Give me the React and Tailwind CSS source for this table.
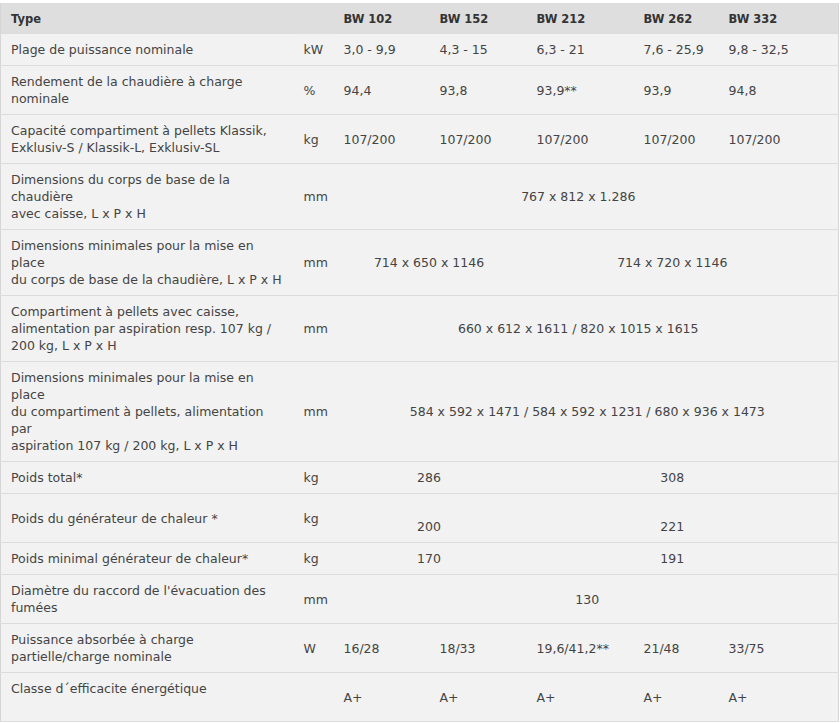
const models = ["BW 102", "BW 152", "BW 212", "BW 262", "BW 332"];

// each row: label lines, unit, cells. a cell is either a string or {span, text, pad}
const rows = [
  { label: ["Plage de puissance nominale"], unit: "kW", cells: ["3,0 - 9,9", "4,3 - 15", "6,3 - 21", "7,6 - 25,9", "9,8 - 32,5"] },
  { label: ["Rendement de la chaudière à charge", "nominale"], unit: "%", cells: ["94,4", "93,8", "93,9**", "93,9", "94,8"] },
  { label: ["Capacité compartiment à pellets Klassik,", "Exklusiv-S / Klassik-L, Exklusiv-SL"], unit: "kg", cells: ["107/200", "107/200", "107/200", "107/200", "107/200"] },
  { label: ["Dimensions du corps de base de la", "chaudière", "avec caisse, L x P x H"], unit: "mm", cells: [{ span: 5, text: "767 x 812 x 1.286", pad: "pl-0 pr-[15px]" }] },
  {
    label: ["Dimensions minimales pour la mise en", "place", "du corps de base de la chaudière, L x P x H"],
    unit: "mm",
    cells: [
      { span: 2, text: "714 x 650 x 1146", pad: "pl-0 pr-[2px]" },
      { span: 3, text: "714 x 720 x 1146", pad: "pl-0 pr-[20px]" },
    ],
  },
  { label: ["Compartiment à pellets avec caisse,", "alimentation par aspiration resp. 107 kg /", "200 kg, L x P x H"], unit: "mm", cells: [{ span: 5, text: "660 x 612 x 1611 / 820 x 1015 x 1615", pad: "pl-0 pr-[15px]" }] },
  {
    label: ["Dimensions minimales pour la mise en", "place", "du compartiment à pellets, alimentation", "par", "aspiration 107 kg / 200 kg, L x P x H"],
    unit: "mm",
    cells: [{ span: 5, text: "584 x 592 x 1471 / 584 x 592 x 1231 / 680 x 936 x 1473", pad: "pl-[3px] pr-0" }],
  },
  {
    label: ["Poids total*"],
    unit: "kg",
    cells: [
      { span: 2, text: "286", pad: "pl-0 pr-[2px]" },
      { span: 3, text: "308", pad: "pl-0 pr-[20px]" },
    ],
  },
  {
    label: ["Poids du générateur de chaleur *"],
    unit: "kg",
    cells: [
      { span: 2, text: "200", pad: "pl-0 pr-[2px]", lower: true },
      { span: 3, text: "221", pad: "pl-0 pr-[20px]", lower: true },
    ],
  },
  {
    label: ["Poids minimal générateur de chaleur*"],
    unit: "kg",
    cells: [
      { span: 2, text: "170", pad: "pl-0 pr-[2px]" },
      { span: 3, text: "191", pad: "pl-0 pr-[20px]" },
    ],
  },
  { label: ["Diamètre du raccord de l'évacuation des", "fumées"], unit: "mm", cells: [{ span: 5, text: "130", pad: "pl-[3px] pr-0" }] },
  { label: ["Puissance absorbée à charge", "partielle/charge nominale"], unit: "W", cells: ["16/28", "18/33", "19,6/41,2**", "21/48", "33/75"] },
  { label: ["Classe d´efficacite énergétique", "\u00a0"], unit: "", cells: ["A+", "A+", "A+", "A+", "A+"] },
];

const td = "align-middle pt-[7px] pb-[7px] border-b border-[#dcdcdc] whitespace-nowrap";

function Lines({ lines }) {
  return lines.map((l, i) => (
    <span key={i}>
      {i > 0 && <br />}
      {l}
    </span>
  ));
}

export default function App() {
  return (
    <div className="bg-white pt-[3px] w-[840px]" style={{ fontFamily: '"DejaVu Sans", Verdana, sans-serif' }}>
      <table className="table-fixed border-collapse w-[838px] text-[12.5px] leading-[17px] text-[#444] bg-[#f2f2f2] border-l border-r border-[#d6d6d6]">
        <colgroup>
          <col className="w-[293px]" />
          <col className="w-[40px]" />
          <col className="w-[96px]" />
          <col className="w-[97px]" />
          <col className="w-[107px]" />
          <col className="w-[85px]" />
          <col className="w-[120px]" />
        </colgroup>
        <thead>
          <tr className="bg-[#dedede] text-[#333] text-[11.5px] font-bold">
            <th className="text-left align-middle pl-[10px] pt-[8px] pb-[5px] border-b border-[#dcdcdc]">Type</th>
            <th className="pl-[10px]"></th>
            {models.map((m) => (
              <th key={m} className="text-left align-middle pl-[10px] pt-[8px] pb-[5px] border-b border-[#dcdcdc] whitespace-nowrap">
                {m}
              </th>
            ))}
          </tr>
        </thead>
        <tbody>
          {rows.map((r, ri) => (
            <tr key={ri}>
              <td className={`${td} pl-[10px] text-left`}>
                <Lines lines={r.label} />
              </td>
              <td className={`${td} pl-[10px] text-left`}>{r.unit}</td>
              {r.cells.map((c, ci) =>
                typeof c === "string" ? (
                  <td key={ci} className={`${td} pl-[10px] text-left`}>
                    {c}
                  </td>
                ) : (
                  <td key={ci} colSpan={c.span} className={`${td} ${c.pad} text-center`}>
                    {c.lower && (
                      <>
                        {"\u00a0"}
                        <br />
                      </>
                    )}
                    {c.text}
                  </td>
                )
              )}
            </tr>
          ))}
        </tbody>
      </table>
    </div>
  );
}
